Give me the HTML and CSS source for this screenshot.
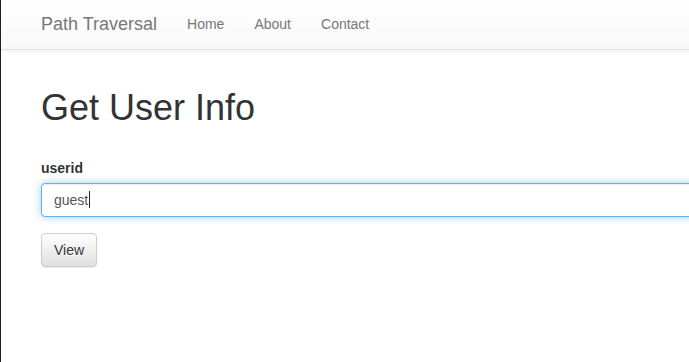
FILE: index.html
```html
<!DOCTYPE html>
<html lang="en">
<head>
    <meta charset="UTF-8">
    <meta name="viewport" content="width=device-width, initial-scale=1.0">
    <title>Path Traversal</title>
    <link rel="stylesheet" href="styles.css">
</head>
<body>

<nav class="navbar">
    <div class="navbar-inner">
        <a class="navbar-brand" href="#">Path Traversal</a>
        <ul class="nav">
            <li><a href="#">Home</a></li>
            <li><a href="#">About</a></li>
            <li><a href="#">Contact</a></li>
        </ul>
    </div>
</nav>

<div class="container">
    <h1>Get User Info</h1>

    <form id="userForm">
        <div class="form-group">
            <label for="userid">userid</label>
            <div class="form-control is-focused" id="userid" role="textbox">guest<span class="text-caret"></span></div>
        </div>

        <button type="button" class="btn btn-default">View</button>
    </form>
</div>

</body>
</html>
```

FILE: styles.css
```css
/* Global Styles */
html, body {
    overflow: hidden;
}

body {
    margin: 0;
    height: 362px;
    border-left: 1px solid #1f1f1f;
    background: #fff;
    font-family: "Liberation Sans", Arial, sans-serif;
    font-size: 14px;
    line-height: 20px;
    color: #333;
}

/* Navbar */
.navbar {
    width: 1200px;
    height: 49px;
    background: linear-gradient(to bottom, #fff 0, #f8f8f8 100%);
    border-bottom: 1px solid #e2e2e2;
    box-shadow: inset 0 1px 0 rgba(255, 255, 255, 0.15), 0 1px 5px rgba(0, 0, 0, 0.075);
}

.navbar-inner {
    display: flex;
    padding-left: 25px;
}

.navbar-brand {
    padding: 14px 15px 15px;
    font-size: 18px;
    line-height: 20px;
    color: #777;
    text-decoration: none;
}

.nav {
    display: flex;
    margin: 0;
    padding: 0;
    list-style: none;
}

.nav a {
    display: block;
    padding: 14px 15px 15px;
    color: #777;
    text-decoration: none;
}

/* Content */
.container {
    width: 1100px;
    padding-left: 40px;
}

h1 {
    margin: 38px 0 30px;
    font-size: 36px;
    font-weight: 500;
    line-height: 40px;
    color: #333;
}

.form-group {
    margin-bottom: 16px;
}

label {
    display: block;
    margin-bottom: 5px;
    font-weight: bold;
}

.form-control {
    box-sizing: border-box;
    height: 34px;
    padding: 6px 12px;
    line-height: 20px;
    color: #555;
    background: #fff;
    border: 1px solid #ccc;
    border-radius: 4px;
    box-shadow: inset 0 1px 1px rgba(0, 0, 0, 0.075);
}

.form-control.is-focused {
    border-color: #66afe9;
    box-shadow: inset 0 1px 1px rgba(0, 0, 0, 0.075), 0 0 8px rgba(102, 175, 233, 0.6);
}

.text-caret {
    display: inline-block;
    width: 1px;
    height: 17px;
    margin-left: 1px;
    vertical-align: -3px;
    background: #222;
}

/* Button */
.btn {
    box-sizing: border-box;
    height: 34px;
    padding: 6px 12px;
    font-family: inherit;
    font-size: 14px;
    line-height: 20px;
    border-radius: 4px;
    cursor: pointer;
}

.btn-default {
    color: #333;
    background: linear-gradient(to bottom, #fff 0, #e0e0e0 100%);
    border: 1px solid #ccc;
    text-shadow: 0 1px 0 #fff;
    box-shadow: inset 0 1px 0 rgba(255, 255, 255, 0.15), 0 1px 1px rgba(0, 0, 0, 0.075);
}
```
